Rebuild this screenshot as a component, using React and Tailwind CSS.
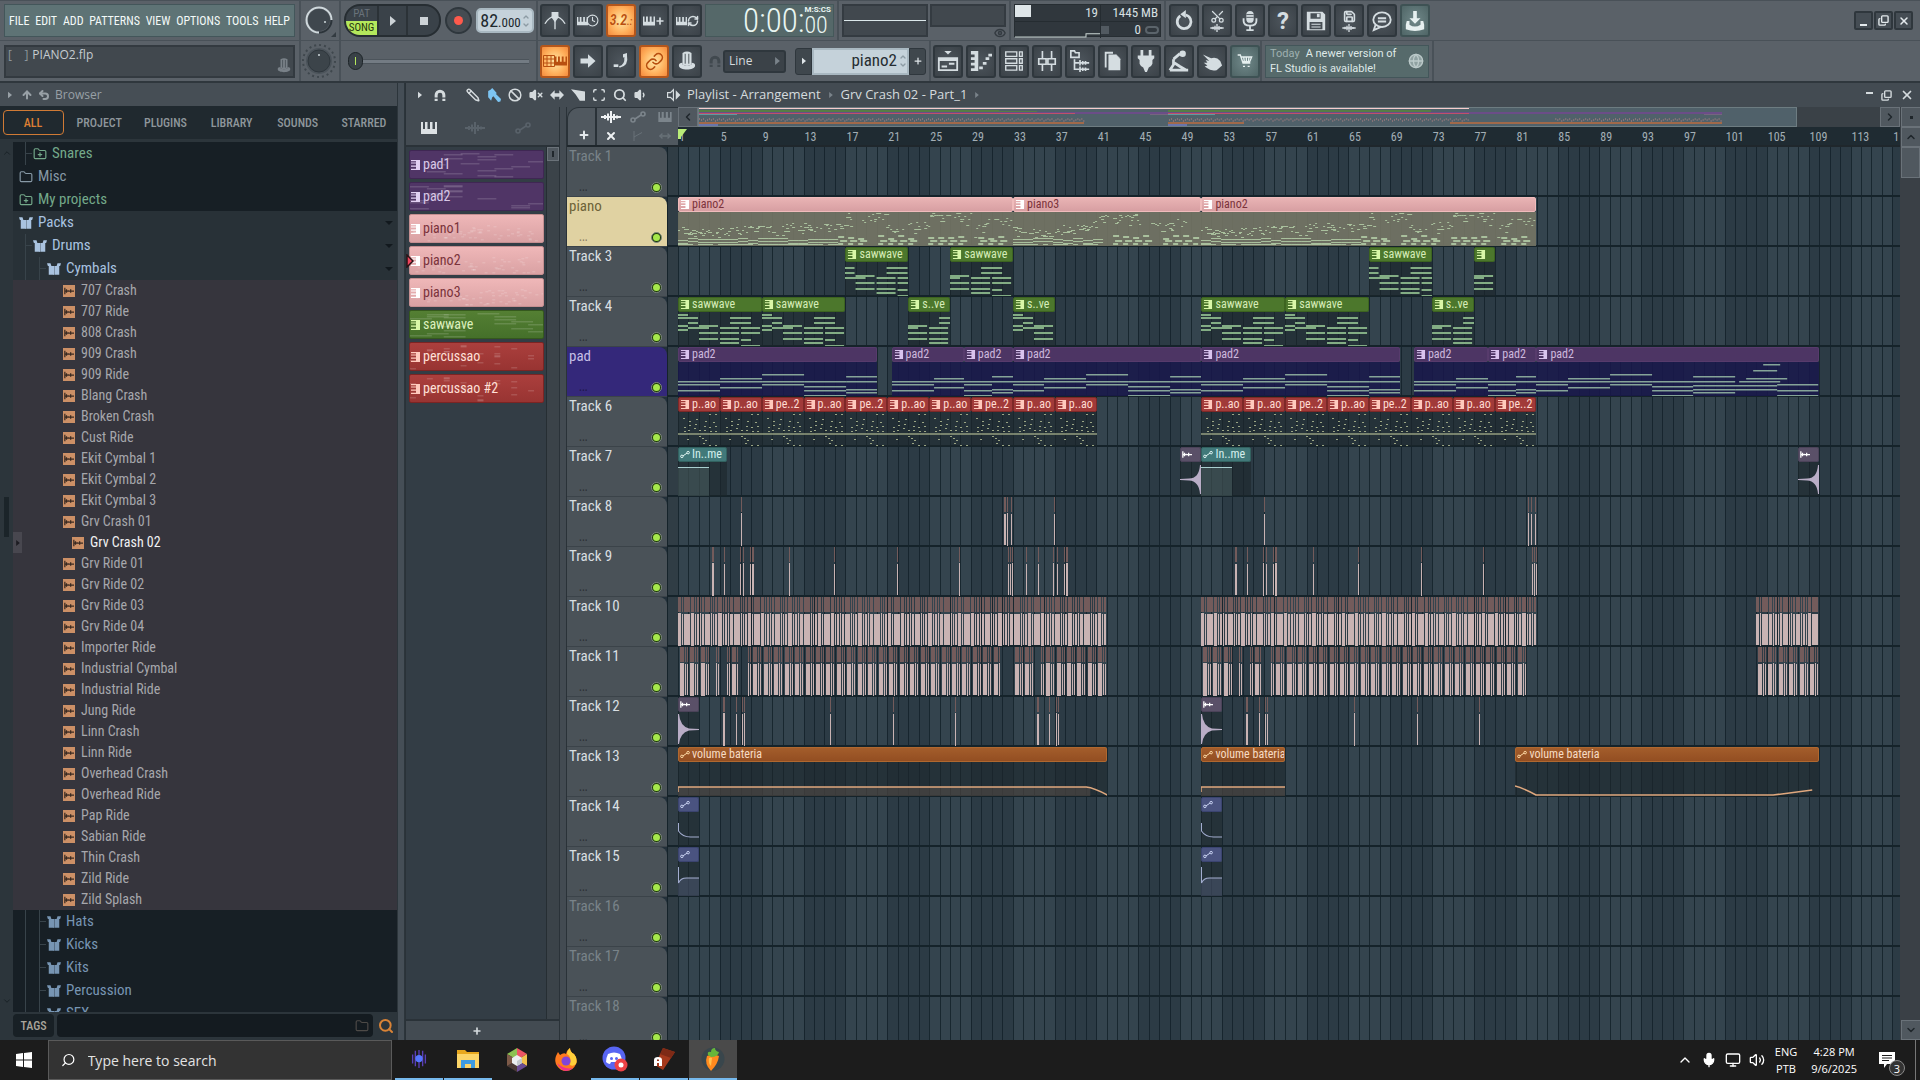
import {
  ArrowUp, Undo2, ChevronUp, ChevronDown, ChevronLeft, ChevronRight, X, Plus, Copy, Search, Folder,
  FolderPlus, Pencil, Ban, VolumeX, MoveHorizontal, Scan, Volume2, Volume1, Link, RefreshCw, Scissors,
  Mic, Save, Globe, Eye, Clock, Monitor,
} from "lucide-react";

const LANE = 1221;
const BAR = 10.46;
const pct = (n) => `${(n / LANE) * 100}%`;

/* ---------- small icons ---------- */
const Keys = ({ className }) => (
  <svg viewBox="0 0 16 12" className={className} fill="currentColor" aria-hidden="true">
    <path d="M0 0h2v7h2V0h2.5v7h2.5V0h2.5v7h2.5V0H16v12H0z" />
  </svg>
);
const PatternIcon = ({ className }) => (
  <svg viewBox="0 0 9 10" className={className} fill="currentColor" aria-hidden="true">
    <path d="M0 0h9v10H0V8.800h5V6.800H0V5.500h5V3.500H0V2.500h5V1.200H0z" />
  </svg>
);
const AutoIcon = ({ className }) => (
  <svg viewBox="0 0 16 12" className={className} fill="none" stroke="currentColor" strokeWidth="1.6" aria-hidden="true">
    <circle cx="3" cy="9" r="2" />
    <circle cx="13" cy="3" r="2" />
    <path d="M5 8l6-4" />
  </svg>
);
const WaveIcon = ({ className }) => (
  <svg viewBox="0 0 20 12" className={className} stroke="currentColor" strokeWidth="2" aria-hidden="true">
    <path d="M0 6h20M4 4v4M7 2.500v7M10 0v12M13 3v6M16 4.500v3" />
  </svg>
);
const AudioIcon = ({ className }) => (
  <svg viewBox="0 0 12 8" className={className} stroke="currentColor" strokeWidth="1.5" aria-hidden="true">
    <path d="M1 0v8M3 2v4M5 3v2M8 2v4M1 4h11" />
  </svg>
);
const PackIcon = ({ className }) => (
  <svg viewBox="0 0 16 13" className={className} fill="currentColor" aria-hidden="true">
    <path d="M0 0h4l1 3h3v10H2V3H1zM16 0h-4l-1 3H9v10h5V3h1z" />
    <path d="M7 3h2v10H7z" opacity=".7" />
  </svg>
);
const Tri = ({ className }) => (
  <svg viewBox="0 0 6 10" className={className} fill="currentColor" aria-hidden="true">
    <path d="M0 0l6 5-6 5z" />
  </svg>
);
const Horseshoe = ({ className }) => (
  <svg viewBox="0 0 14 14" className={className} fill="none" stroke="currentColor" strokeWidth="3.5" aria-hidden="true">
    <path d="M2.500 10V7a4.500 4.500 0 0 1 9 0v3" />
    <path d="M2.500 11.500V14M11.500 11.500V14" />
  </svg>
);
const Hat = ({ className }) => (
  <svg viewBox="0 0 20 22" className={className} fill="currentColor" aria-hidden="true">
    <path d="M5 2q5-3 10 0v13q-5 3-10 0z" />
    <path d="M1 16q0-3 4-3v2q5 3 10 0v-2q4 0 4 3c0 6-18 6-18 0z" />
    <path d="M8 3v11M12 3v11" stroke="#3f474d" strokeWidth="1" />
  </svg>
);
const Ico = ({ d, w = 2, fill = "none", className = "size-[22px]", children }) => (
  <svg viewBox="0 0 24 24" className={className} fill={fill} stroke="currentColor" strokeWidth={w} aria-hidden="true">
    {d && <path d={d} />}
    {children}
  </svg>
);

/* ---------- toolbar ---------- */
function Tool({ label, tone = "dark", children }) {
  const tones = {
    dark: "border-[#2f373d] bg-[radial-gradient(#4d555c,#3b4248)] text-[#d5dde1]",
    hot: "border-[#b4561b] bg-[radial-gradient(#ffe9a8,#ffb05c_60%,#f58a3c)] text-[#b84f10]",
    teal: "border-[#3e5254] bg-[radial-gradient(#71898a,#4f6566)] text-[#e6f0f0]",
  };
  return (
    <button type="button" aria-label={label} className={`flex h-[33px] w-[30px] shrink-0 items-center justify-center rounded-[3px] border-2 ${tones[tone]}`}>
      {children}
    </button>
  );
}

const Cell = ({ className, children }) => (
  <div className={`flex shrink-0 items-center border-r-2 border-[#495158] ${className}`}>{children}</div>
);

const MENU = ["FILE", "EDIT", "ADD", "PATTERNS", "VIEW", "OPTIONS", "TOOLS", "HELP"];

function Toolbar() {
  return (
    <header className="shrink-0 border-b-2 border-[#2f373d] bg-[#5a6168]">
      <div className="flex h-[41px] border-t border-b border-[#495158]">
        <Cell className="w-[301px] px-1">
          <nav className="flex h-[33px] w-full items-center justify-between border border-[#43565a] bg-[#5e7375] px-1 font-['Roboto_Condensed','Roboto',sans-serif] text-[12px] text-[#f4faf8]">
            {MENU.map((m) => (
              <button key={m} type="button">{m}</button>
            ))}
          </nav>
        </Cell>
        <Cell className="w-10 justify-center">
          <svg viewBox="0 0 34 34" className="size-[34px]" role="img" aria-label="Main volume">
            <circle cx="16" cy="16" r="11" fill="#3f474e" />
            <path d="M16 28.500A12.500 12.500 0 1 1 28.500 16" fill="none" stroke="#cfd8dc" strokeWidth="2" />
            <path d="M28.500 16A12.500 12.500 0 0 1 16 28.500" fill="none" stroke="#2c343a" strokeWidth="2" />
            <circle cx="22" cy="18" r="1" fill="#cfd8dc" />
            <path d="M33 28v5h-5z" fill="#333b41" />
          </svg>
        </Cell>
        <Cell className="w-[197px] gap-1 pl-[3px]">
          <div className="flex h-[33px] overflow-hidden rounded-2xl border-2 border-[#262d32] bg-[#3a4249]">
            <button type="button" className="w-[31px] font-['Roboto_Condensed',sans-serif] text-[11px] leading-[14px]">
              <span className="block pt-px text-[#69727a]">PAT</span>
              <span className="block bg-[#b4e85c] text-[#24350e]">SONG</span>
            </button>
            <button type="button" aria-label="Play" className="flex w-[31px] items-center justify-center border-x-2 border-[#2b3237] text-[#cdd3d7]">
              <Tri className="h-2.5 w-1.5" />
            </button>
            <button type="button" aria-label="Stop" className="flex w-[31px] items-center justify-center">
              <span className="size-2 bg-[#cdd3d7]" />
            </button>
          </div>
          <button type="button" aria-label="Record" className="flex size-[27px] items-center justify-center rounded-full border-2 border-[#2f373d] bg-[#454c52]">
            <span className="size-[9px] rounded-full bg-[#ff5a4c]" />
          </button>
          <div className="mr-0.5 flex h-[25px] flex-1 items-center justify-center rounded-[5px] border-2 border-[#a9b8c1] bg-[#c5d2da] font-['Roboto_Condensed',sans-serif] text-[18px] text-[#20282d]">
            82<span className="pt-1 text-[13px]">.000</span>
            <span className="ml-px flex flex-col text-[#8d9ba4]">
              <ChevronUp className="size-2" strokeWidth={4} />
              <ChevronDown className="size-2" strokeWidth={4} />
            </span>
          </div>
        </Cell>
        <Cell className="w-[301px] gap-[3px] pl-0.5">
          <Tool label="Metronome">
            <Ico w={1.5}>
              <path d="M1 15q5-8 11-8t11 8M12 7v14" />
              <path d="M9 3h6v5l-3 4-3-4z" fill="currentColor" />
            </Ico>
          </Tool>
          <Tool label="Wait for input">
            <Keys className="h-3 w-[11px]" />
            <Clock className="-ml-0.5 size-[13px]" />
          </Tool>
          <Tool label="Countdown" tone="hot">
            <span className="font-['Roboto_Condensed',sans-serif] text-[14px] font-medium italic">3.2<span className="text-[10px]">.:</span></span>
          </Tool>
          <Tool label="Overdub">
            <Keys className="h-3 w-3" />
            <Plus className="size-2.5" strokeWidth={4} />
          </Tool>
          <Tool label="Loop record">
            <Keys className="h-3 w-[11px]" />
            <RefreshCw className="size-3" strokeWidth={3} />
          </Tool>
          <div className="flex h-[33px] w-[129px] items-center justify-end border border-[#45585a] bg-[#556869] pr-0.5 font-['Roboto_Condensed','Roboto',sans-serif] font-light text-[#eaf6f2]">
            <span className="text-[33px] leading-[33px]">0:00:</span>
            <span className="flex flex-col">
              <span className="text-right font-['Roboto',sans-serif] text-[8px] leading-[9px] font-bold">M:S:CS</span>
              <span className="text-[24px] leading-[22px]">00</span>
            </span>
          </div>
        </Cell>
        <Cell className="w-[172px] items-start gap-0.5 px-[3px] pt-[3px]">
          <div className="flex h-[33px] w-[86px] items-center border-2 border-[#343b41] bg-[#41484e]">
            <span className="h-px w-full bg-[#dce8ea]" />
          </div>
          <div className="flex flex-1 flex-col items-end">
            <div className="h-[23px] w-full border-2 border-[#343b41] bg-[#41484e]" />
            <Eye className="size-3 text-[#343b41]" strokeWidth={3} />
          </div>
        </Cell>
        <Cell className="w-[155px] px-[3px]">
          <div className="grid h-[33px] w-full grid-cols-[86px_1fr] border border-[#272e33] bg-[#30373d] font-['Roboto_Condensed',sans-serif] text-[13px] leading-4 text-[#d8e0e3]">
            <div className="flex justify-between border-r border-b border-[#252c31] pr-0.5">
              <span className="h-3 w-4 bg-[#dfe6e9]" />19
            </div>
            <div className="border-b border-[#252c31] pr-0.5 text-right whitespace-nowrap">1445 MB</div>
            <div className="flex items-end border-r border-[#252c31]">
              <svg viewBox="0 0 85 15" preserveAspectRatio="none" className="h-full w-full" aria-hidden="true">
                <path d="M0 14h71v-3h14" fill="none" stroke="#c9d6d3" />
              </svg>
            </div>
            <div className="flex items-center justify-between">
              <span className="size-2 bg-[#525a61]" />
              <span className="flex items-center gap-1">0<span className="mr-px h-2 w-3.5 rounded-full border-2 border-[#5b646b]" /></span>
            </div>
          </div>
        </Cell>
        <div className="flex items-center gap-[3px] pl-[3px]">
          <Tool label="Undo"><Ico w={3} d="M14 5.500a7.500 7.500 0 1 1-6 1"><path d="M14 0v9L8 4.500z" fill="currentColor" strokeWidth="0" /></Ico></Tool>
          <Tool label="Cut">
            <span className="flex flex-col items-center"><Scissors className="size-[15px] -rotate-90" /><WaveIcon className="h-2 w-3.5" /></span>
          </Tool>
          <Tool label="Microphone">
            <Ico w={2}><rect x="8" y="1" width="8" height="13" rx="4" fill="currentColor" strokeWidth="0" /><path d="M5 9v3q0 5 7 5t7-5V9M12 17v5M8 22h8" /><path d="M8 5h8M8 8h8" stroke="#474f56" strokeWidth="1" /></Ico>
          </Tool>
          <Tool label="Help"><span className="font-['Roboto',sans-serif] text-[24px] leading-none font-bold">?</span></Tool>
          <Tool label="Save">
            <Ico fill="currentColor" w={0}><path d="M2 2h17l3 3v17H2zM6 3.500v6h11v-6zM5 13v8h14v-8z" fillRule="evenodd" /><path d="M7 15h10v1H7zM7 18h10v1H7zM13 4h3v4h-3z" /></Ico>
          </Tool>
          <Tool label="Save new version">
            <span className="flex flex-col items-center gap-px"><Save className="size-[13px]" strokeWidth={3} /><WaveIcon className="h-2 w-3.5" /></span>
          </Tool>
          <Tool label="Chat">
            <Ico w={2}><ellipse cx="12" cy="10.500" rx="9.500" ry="8" /><path d="M5 16l-2 6 8-3.500M7.500 9h9M7.500 12.500h9" /></Ico>
          </Tool>
          <Tool label="Download" tone="teal">
            <Ico w={0} fill="currentColor"><path d="M10 1h4v8h4l-6 6-6-6h4z" /><path d="M3 12l-1 4v5q10 4 20 0v-5l-1-4h-3v4q-6 4-12 0v-4z" /></Ico>
          </Tool>
        </div>
        <div className="mr-[7px] ml-auto flex items-center gap-px text-[#e3e9ec]">
          {[["Minimise", <span className="mt-2 h-0.5 w-[7px] bg-current" />], ["Restore", <Copy className="size-[11px] -scale-x-100 rotate-180" strokeWidth={3} />], ["Close", <X className="size-3" strokeWidth={3} />]].map(([n, ic]) => (
            <button key={n} type="button" aria-label={n} className="flex size-[19px] items-center justify-center rounded-[2px] border-2 border-[#2f373d] bg-[#454d54]">{ic}</button>
          ))}
        </div>
      </div>

      <div className="flex h-[40px]">
        <Cell className="w-[301px] px-1">
          <div className="flex h-[33px] w-full justify-between border-2 border-[#333a40] bg-[#41484e] px-0.5 font-['Open_Sans',sans-serif] text-[12px] leading-[15px] text-[#c5ccd0]">
            <span><span className="mr-1 whitespace-pre text-[#8c959b]">[&nbsp;&nbsp;&nbsp; ]</span>PIANO2.flp</span>
            <Hat className="mt-2.5 h-[17px] w-3.5 text-[#798188]" />
          </div>
        </Cell>
        <Cell className="w-10 justify-center">
          <svg viewBox="0 0 36 36" className="size-9" role="img" aria-label="Master pitch">
            <circle cx="17" cy="18" r="16" fill="none" stroke="#3f474d" strokeWidth="2" strokeDasharray="2 3" />
            <circle cx="17" cy="18" r="13" fill="#4b535a" />
            <circle cx="17" cy="18" r="11" fill="#3c444a" stroke="#2f373d" />
            <circle cx="17" cy="12" r="1" fill="#cfd8dc" />
          </svg>
        </Cell>
        <Cell className="w-[197px] px-[7px]">
          <div className="relative flex w-full items-center">
            <span className="h-[5px] w-full border-y border-[#4c545b] bg-[#737b83]" />
            <input type="range" aria-label="Song position" min="0" max="100" defaultValue="0" className="absolute inset-0 w-full opacity-0" />
            <span className="pointer-events-none absolute left-0 flex h-[18px] w-[15px] items-center justify-center rounded-full border border-[#1e2529] bg-[#394147]"><span className="h-2 w-px bg-[#b4e85c]" /></span>
          </div>
        </Cell>
        <Cell className="w-[393px] gap-[3px] pl-0.5">
          <Tool label="Typing keyboard" tone="hot">
            <svg viewBox="0 0 12 12" className="h-3 w-3" fill="none" stroke="currentColor" aria-hidden="true"><path d="M.5.500h11v11H.5zM.5 4h11M.5 8h11M4 0v12M8 0v12" /></svg>
            <Keys className="h-3 w-3" />
          </Tool>
          <Tool label="Step edit"><Ico w={0} fill="currentColor" className="size-5" d="M3 9h9V4l9 8-9 8v-5H3z" /></Tool>
          <Tool label="Note slide"><Ico w={0} fill="currentColor" className="size-4"><path d="M1 17h7v4H1z" /><path d="M9 20q9-2 8-14l-2 1V2l6-2v4q3 15-11 18z" /></Ico></Tool>
          <Tool label="Link" tone="hot"><Link className="size-[19px]" strokeWidth={2} /></Tool>
          <Tool label="Plugin"><Hat className="h-5 w-[18px]" /></Tool>
          <Horseshoe className="ml-1 size-3 text-[#41494f]" />
          <button type="button" className="-ml-px flex h-[23px] w-[63px] items-center justify-between rounded-[3px] border-2 border-[#2f373d] bg-[#3b4248] px-1 font-['Open_Sans',sans-serif] text-[12px] text-[#d5dbde]">
            Line<Tri className="h-2 w-[5px] text-[#7a838a]" />
          </button>
          <div className="ml-1.5 flex h-[27px] flex-1 items-stretch pr-[3px]">
            <button type="button" aria-label="Pattern menu" className="flex w-[17px] items-center justify-center rounded-l-[3px] border border-[#2f373d] bg-[#3f474d] text-[#dfe5e8]"><Tri className="h-2 w-1" /></button>
            <div className="flex flex-1 items-center justify-end gap-0.5 border-2 border-[#a9b8c1] bg-[#c5d2da] font-['Roboto_Condensed',sans-serif] text-[17px] text-[#252d32]">
              piano2
              <span className="flex flex-col text-[#8d9ba4]"><ChevronUp className="size-2" strokeWidth={4} /><ChevronDown className="size-2" strokeWidth={4} /></span>
            </div>
            <button type="button" aria-label="Add pattern" className="flex w-[17px] items-center justify-center rounded-r-[3px] border border-[#2f373d] bg-[#3f474d] text-[#dfe5e8]"><Plus className="size-2.5" strokeWidth={3} /></button>
          </div>
        </Cell>
        <Cell className="w-[331px] gap-[3px] pl-0.5">
          <Tool label="Playlist"><Ico w={2}><path d="M2 9h20v13H2zM2 11h20M5 18h6M13 15h6" /><path d="M8 1h8l-4 4z" fill="currentColor" strokeWidth="0" /></Ico></Tool>
          <Tool label="Piano roll"><Ico w={0} fill="currentColor"><path d="M1 1h8v22H1v-3h4v-3H1v-3h4v-3H1V8h4V5H1z" /><path d="M10 18h4v3h-4zM14 13h4v3h-4zM17 8h4v3h-4zM20 4h4v3h-4z" /></Ico></Tool>
          <Tool label="Channel rack"><Ico w={1.5} d="M3 2h12v5H3zM3 9.500h12v5H3zM3 17h12v5H3zM18 2h3v5h-3zM18 9.500h3v5h-3zM18 17h3v5h-3z" /></Tool>
          <Tool label="Mixer"><Ico w={1.8} d="M7 1v8M7 16v7M17 1v8M17 16v7M3 9.500h8v6H3zM13 9.500h8v6h-8z" /></Tool>
          <Tool label="Browser"><Ico w={1.8} d="M2 1h4l1 2h4v5H2zM6 10v11h5M6 14h5M12 11v6M12 14h10M15 12v4M18 12v4M12 18v6M12 21h10M15 19v4M18 19v4" /></Tool>
          <Tool label="Projects"><Ico w={0} fill="currentColor"><path d="M7 5h8l5 5v12H7z" /><path d="M15 4l5.500 5.500H15z" opacity=".7" /><path d="M3 2h9v2H5v15H3z" /></Ico></Tool>
          <Tool label="Plugins"><Ico w={0} fill="currentColor"><path d="M6 0h3v6H6zM15 0h3v6h-3zM3 6h18v3l-2 2v4q-1 3-4 4l-2 5h-2l-2-5q-3-1-4-4v-4L3 9z" /></Ico></Tool>
          <Tool label="Performance"><Ico w={3}><path d="M6 10l7-6M6 10v6l-4 6M7 14l6 4 7 4M2 22h20" /><circle cx="16" cy="4" r="3.5" fill="currentColor" strokeWidth="0" /></Ico></Tool>
          <Tool label="Touch"><Ico w={0} fill="currentColor" d="M2 5l9 4q6-2 10 3l2 5-6 5q-7 1-10-2l-3-2 3-1-4-3 4 0-2-3 4 1z" /></Tool>
          <Tool label="Shop" tone="teal"><Ico w={2} className="size-4" d="M1 3h4l4 12h11M6 6h16l-3 7H8M10 6l1 7M14 6v7M18 6l-1 7M9 20h3M16 20h3" /></Tool>
        </Cell>
        <Cell className="w-[172px] px-[3px]">
          <div className="flex h-[33px] w-full items-center justify-between border border-[#43565a] bg-[#566a6b] px-1 font-['Roboto',sans-serif] text-[11px] leading-[15px] whitespace-nowrap text-[#dfe9e8]">
            <p><span className="mr-1.5 text-[#9fb0b0]">Today</span>A newer version of<br />FL Studio is available!</p>
            <Globe className="size-4 text-[#bccaca]" fill="#8fa1a1" />
          </div>
        </Cell>
      </div>
    </header>
  );
}

/* ---------- browser ---------- */
const TABS = ["ALL", "PROJECT", "PLUGINS", "LIBRARY", "SOUNDS", "STARRED"];
const FILES = [
  "707 Crash", "707 Ride", "808 Crash", "909 Crash", "909 Ride", "Blang Crash", "Broken Crash", "Cust Ride", "Ekit Cymbal 1",
  "Ekit Cymbal 2", "Ekit Cymbal 3", "Grv Crash 01", "Grv Crash 02", "Grv Ride 01", "Grv Ride 02", "Grv Ride 03", "Grv Ride 04",
  "Importer Ride", "Industrial Cymbal", "Industrial Ride", "Jung Ride", "Linn Crash", "Linn Ride", "Overhead Crash",
  "Overhead Ride", "Pap Ride", "Sabian Ride", "Thin Crash", "Zild Ride", "Zild Splash",
];

function FolderRow({ pad, icon, color, open, lines, children }) {
  return (
    <li className={`flex h-[23px] shrink-0 items-center ${open ? "bg-[#283137]" : ""}`}>
      {lines >= 1 && <span className="ml-3 h-full w-px bg-[#38434a]" />}
      {lines >= 2 && <span className="ml-[13px] h-full w-px bg-[#38434a]" />}
      {lines >= 1 && <span className="h-px w-1.5 bg-[#38434a]" />}
      <button type="button" className={`flex flex-1 items-center gap-[5px] text-[15px] ${pad} ${color}`}>
        {icon}{children}
      </button>
      {open && <span className="mr-1 border-x-4 border-t-4 border-x-transparent border-t-[#12191e]" />}
    </li>
  );
}

function Browser() {
  const pack = <PackIcon className="h-3 w-3.5" />;
  return (
    <aside className="flex w-[397px] shrink-0 flex-col bg-[#2c353b]">
      <div className="flex h-[23px] shrink-0 items-center gap-[5px] bg-[#464e55] pl-2 font-['Open_Sans',sans-serif] text-[12px] text-[#98a0a6]">
        <Tri className="mr-1 h-2 w-1" />
        <ArrowUp className="size-3" strokeWidth={4} />
        <Undo2 className="size-3" strokeWidth={4} />
        Browser
      </div>
      <div className="grid h-[33px] shrink-0 grid-cols-6 place-items-center bg-[#20292f] font-['Roboto_Condensed',sans-serif] text-[12px] font-medium text-[#8e969b]">
        {TABS.map((t, i) => (
          <button key={t} type="button" className={i === 0 ? "h-[25px] w-[61px] rounded-[4px] border border-[#d07a35] text-[#dd7e33]" : ""}>{t}</button>
        ))}
      </div>
      <div className="flex min-h-0 flex-1 pt-[3px]">
        <div className="flex w-[13px] shrink-0 flex-col items-center justify-between py-1.5 text-[#161e23]">
          <ChevronUp className="size-2.5" />
          <span className="-mt-[120px] h-10 w-[5px] bg-[#1b2429]" />
          <ChevronDown className="size-2.5" />
        </div>
        <ul className="relative flex min-h-0 flex-1 flex-col overflow-hidden bg-[#171f25] font-['Roboto_Condensed',sans-serif]">
          <FolderRow lines={1} pad="pl-px" color="text-[#74a98a]" icon={<FolderPlus className="size-3.5" />}>Snares</FolderRow>
          <FolderRow pad="pl-1.5" color="text-[#8799a6]" icon={<Folder className="size-3.5" />}>Misc</FolderRow>
          <FolderRow pad="pl-1.5" color="text-[#74a98a]" icon={<FolderPlus className="size-3.5" />}>My projects</FolderRow>
          <FolderRow open pad="pl-1.5" color="text-[#a9c3e0]" icon={pack}>Packs</FolderRow>
          <FolderRow open lines={1} pad="pl-px" color="text-[#a9c3e0]" icon={pack}>Drums</FolderRow>
          <FolderRow open lines={2} pad="pl-px" color="text-[#a9c3e0]" icon={pack}>Cymbals</FolderRow>
          {FILES.map((f) => {
            const sel = f === "Grv Crash 02";
            return (
              <li key={f} className="relative h-[21px] shrink-0 bg-[#36353d]">
                {sel && <span className="absolute left-0 flex h-[21px] w-[9px] items-center justify-center bg-[#48474f] text-[#1d1c22]"><Tri className="h-1.5 w-1" /></span>}
                <button type="button" className={`flex h-full items-center gap-1.5 text-[14px] ${sel ? "pl-[59px] text-[#f1f1f3]" : "pl-[50px] text-[#a6a7ac]"}`}>
                  <span className="flex h-3 w-3 items-center justify-center bg-[#cd9066] text-[#3a2a22]"><AudioIcon className="h-2 w-2.5" /></span>
                  {f}
                </button>
              </li>
            );
          })}
          {["Hats", "Kicks", "Kits", "Percussion", "SFX"].map((f) => (
            <FolderRow key={f} lines={2} pad="pl-px" color="text-[#7795b3]" icon={pack}>{f}</FolderRow>
          ))}
        </ul>
      </div>
      <div className="flex h-7 shrink-0 items-center gap-[3px] pt-0.5 pr-px pb-[3px] pl-[13px]">
        <button type="button" className="h-[23px] w-[41px] rounded-[4px] bg-[#182025] font-['Roboto_Condensed',sans-serif] text-[12px] font-medium text-[#a9a59b]">TAGS</button>
        <div className="flex h-[23px] flex-1 items-center rounded-[4px] bg-[#141b20] pr-1">
          <input type="text" aria-label="Filter by tag" className="w-0 flex-1 bg-transparent text-[13px] text-white outline-none" />
          <Folder className="size-3.5 text-[#4d4a47]" />
        </div>
        <button type="button" aria-label="Search" className="px-0.5 text-[#d98336]"><Search className="size-4" strokeWidth={3} /></button>
      </div>
    </aside>
  );
}

/* ---------- note data ---------- */
function rng(seed) {
  let s = seed;
  return () => {
    s = (s * 1103515245 + 12345) % 2147483648;
    return s / 2147483648;
  };
}

function pianoNotes(seed, width) {
  const r = rng(seed);
  const out = [];
  let drift = 32;
  for (let x = 0; x < width; x += 2) {
    const t = x / width;
    if (x % 42 < 2) drift = t < 0.28 ? 32 : 20 + r() * 12;
    drift = Math.max(19, Math.min(36, drift + (r() - 0.5) * 3));
    const sparse = t > 0.5 && (x % 46) > 34;
    if (r() < (sparse ? 0.2 : 0.85)) out.push([x, Math.round(drift + (r() - 0.5) * 8), r() < 0.15 ? 5 : 2, 1]);
    if (r() < 0.35 && !sparse) out.push([x, Math.round(drift + (r() - 0.3) * (t > 0.5 ? 16 : 8)), 3, 1]);
  }
  for (let x = 0; x < width; x += 10) {
    const low = x < width * 0.45;
    if (low) {
      const y = 41 + Math.round(r() * 2);
      out.push([x, y, 10, 1], [x, y + 3, 10, 1], [x, 47, r() < 0.5 ? 10 : 5, 1]);
    } else if (x % 50 < 36) {
      out.push([x, 38 + Math.round(r() * 3), 6, 2], [x + 2, 43, 7, 2], [x, 46, 5, 2]);
    }
  }
  return out.filter((n) => n[0] + n[2] <= width && n[1] < 49);
}

const SAW = [
  [0, 17, 10], [0, 20, 10], [10, 20, 10], [10, 25, 10], [0, 28, 10], [21, 28, 19], [10, 30, 21], [0, 32, 10], [21, 35, 19], [21, 41, 19],
  [42, 30, 19], [42, 35, 19], [42, 41, 19], [42, 45, 19], [52, 20, 21], [52, 25, 21],
  [63, 30, 19], [63, 35, 19], [63, 42, 10], [63, 48, 19],
];
const chord = (x, w, ys) => ys.map((y) => [x, y, w]);
const A = [34, 37, 43], B = [31, 34, 40], C = [27, 34, 37], D = [34, 39, 43, 48], E = [29, 34, 42, 45];
const PAD1 = [...chord(0, 42, A), ...chord(42, 42, B), ...chord(84, 42, C), ...chord(126, 42, D), ...chord(168, 31, E)];
const PAD2 = [...chord(0, 42, A), ...chord(42, 32, B)];
const PAD3 = [...chord(0, 28, [34, 37, 43, 48]), ...chord(28, 21, E)];
const PAD4 = [...chord(0, 31, A), ...chord(31, 42, B), ...chord(73, 42, C), ...chord(115, 42, D), ...chord(157, 31, E)];
const PAD5 = [
  ...chord(0, 32, A), ...chord(32, 42, B), ...chord(74, 42, C), ...chord(116, 41, D), ...chord(157, 42, E),
  [157, 38, 84], [199, 42, 42], [203, 34, 41], [210, 31, 41], [217, 23, 24], [227, 17, 17], [241, 37, 41], [241, 43, 41], [241, 48, 41],
];
const PERC = [
  [5, 21], [6, 30], [6, 34], [10, 33], [11, 24], [11, 28], [16, 31], [18, 22], [17, 27], [21, 33], [26, 29], [26, 33], [27, 24], [31, 17], [31, 30],
  [32, 34], [37, 17], [37, 34], [35, 25], [37, 29], [9, 42], [24, 41], [27, 43], [25, 46], [31, 48], [37, 48], [21, 39],
];

const KIND = {
  piano: { head: "bg-[linear-gradient(#e9b3b4,#d79fa2)] border-[#f0bcbc] text-[#7b333b]", icon: "text-white", body: "bg-[#747665]/90", note: "#a9c09d" },
  saw: { head: "bg-[#4c772c] border-[#3d6420] text-[#d6ecb8]", icon: "text-[#d9f7a8]", body: "bg-[#1c262c]/60", note: "#83ad84" },
  pad: { head: "bg-[#4d3564] border-[#573b6c] text-[#cdb9de]", icon: "text-[#d9c4ee]", body: "bg-[#19184b]/85", note: "#85a498" },
  perc: { head: "bg-[#a13a39] border-[#7d2827] text-[#ffdcd2]", icon: "text-[#ffc9bd]", body: "bg-[#1c262c]/60", note: "#9ba584" },
  auto: { head: "bg-[#41797a] border-[#32615f] text-[#d3eeec]", icon: "text-[#e4f7f5]", body: "bg-[#1c262c]/60" },
  wave: { head: "bg-[#5a5068] border-[#4b4359] text-white", icon: "text-white", body: "bg-[#1c262c]/60" },
  vol: { head: "bg-[linear-gradient(#a35d2b,#934e22)] border-[#b0682f] text-[#f7dcc4]", icon: "text-[#ffdca8]", body: "bg-[#1c262c]/60" },
  env: { head: "bg-[#4a5380] border-[#3b4470] text-white", icon: "text-[#cdd6f5]", body: "bg-[#1c262c]/60" },
};

function Clip({ kind, at, len, label, notes = [], off = 0, children }) {
  const k = KIND[kind];
  const w = len * BAR;
  const Icon = kind === "wave" ? AudioIcon : ["auto", "vol", "env"].includes(kind) ? AutoIcon : PatternIcon;
  return (
    <div className="absolute top-0 flex h-[49px] flex-col" style={{ left: pct((at - 1) * BAR), width: pct(w) }}>
      <div className={`flex h-[15px] shrink-0 items-center gap-0.5 overflow-hidden rounded-[2px] border pl-px font-['Roboto_Condensed',sans-serif] text-[12px] leading-[13px] whitespace-nowrap ${k.head}`}>
        <Icon className={`h-[9px] w-[10px] shrink-0 ${k.icon}`} />
        {label}
      </div>
      <div className={`min-h-0 flex-1 ${k.body}`}>
        <svg viewBox={`${off * BAR} 15 ${w} 34`} preserveAspectRatio="none" className="h-full w-full" aria-hidden="true">
          {notes.map(([x, y, nw, nh = 2], i) => <rect key={i} x={x} y={y} width={nw} height={nh} fill={k.note} />)}
          {children}
        </svg>
      </div>
    </div>
  );
}

/* each hit is [x, width]: a muted label strip over a bright waveform body */
function Hits({ hits }) {
  return (
    <svg viewBox={`0 0 ${LANE} 50`} preserveAspectRatio="none" className="absolute inset-0 h-full w-full" shapeRendering="crispEdges" aria-hidden="true">
      {hits.map(([x, w], i) => (
        <g key={i}>
          <rect x={x} y="0" width={w} height="15" fill="#735b5b" />
          <rect x={x} y={i % 3 ? 17 : 16} width={w} height={i % 3 ? 31 : 33} fill="#c9b3b3" />
        </g>
      ))}
    </svg>
  );
}

const SEC = 523;
const repeat = (hits, cut) => [...hits, ...hits.filter(([x]) => x < cut).map(([x, w]) => [x + SEC, w])];
const T8 = [...repeat([[63, 1]], 100), [326, 2], [329, 1], [333, 1], [376, 1], [849, 1], [852, 1], [856, 1]];
const T9 = repeat([[34, 2], [46, 1], [62, 1], [65, 1], [72, 1], [74, 2], [111, 1], [156, 1], [219, 1], [281, 1], [330, 1], [332, 1], [334, 1], [348, 1], [360, 1], [375, 1], [379, 1], [386, 1], [388, 2]], 335);
const T12 = repeat([[45, 2], [58, 1], [64, 1], [66, 1], [152, 1], [215, 1], [277, 1], [359, 2], [371, 1], [378, 1], [380, 1]], 280);
function dense(from, to) {
  const ws = [3, 1, 6, 3, 1, 2, 1, 2, 5, 1, 1, 2, 4, 1, 2, 1, 3, 6, 1, 1, 2];
  const out = [];
  let x = from;
  for (let i = 0; x < to; i++) {
    const w = Math.min(ws[i % ws.length], to - x);
    out.push([x, w]);
    x += w + 1;
  }
  return out;
}
function groups(from, to, gaps = []) {
  const out = [];
  for (let g = from; g < to; g += BAR) {
    const b = Math.round(g);
    [[0, 4], [5, 1], [7, 1]].forEach(([dx, w]) => {
      const x = b + dx;
      if (x < to && !gaps.some(([a, z]) => x >= a && x < z)) out.push([x, w]);
    });
  }
  return out;
}
const T10 = [...dense(0, 428), ...dense(523, 857), ...dense(1077, 1139)];
const T11 = [...groups(2, 428, [[31, 35], [42, 48], [61, 68], [323, 336], [356, 361]]), ...groups(525, 848, [[554, 558], [565, 571], [584, 590]]), ...groups(1079, 1140)];

const PERC_A = ["p..ao", "p..ao", "pe..2", "p..ao", "pe..2", "p..ao", "p..ao", "pe..2", "p..ao", "p..ao"];
const PercNotes = (
  <g fill="#9ba584">
    <rect x="0" y="36" width="42" height="2" opacity=".7" />
    {PERC.map(([x, y], i) => <rect key={i} x={x} y={y} width="2" height="1" />)}
  </g>
);
const Fade = ({ flip }) => (
  <path d={flip ? "M0 32l9-.5q10 0 11-13.500h1v29h-1q-1-13-11-13.500L0 33z" : "M0 17h1q1 12 10 14.500l10 .5v1l-10 .5Q2 36 1 47H0z"} fill="#b9adc6" />
);
const IntroAuto = () => (<><rect x="0" y="20" width="31" height="30" fill="#6b8580" opacity=".3" /><rect x="0" y="20" width="31" height="1" fill="#a9cfd0" /></>);
const P2 = pianoNotes(7, 334);
const P3 = pianoNotes(23, 188);

const TRACKS = [
  { name: "Track 1", off: true },
  {
    name: "piano", head: "bg-[#e0d2a2] text-[#6d6238]",
    clips: [<Clip key="a" kind="piano" at={1} len={32} label="piano2" notes={P2} />, <Clip key="b" kind="piano" at={33} len={18} label="piano3" notes={P3} />, <Clip key="c" kind="piano" at={51} len={32} label="piano2" notes={P2} />],
  },
  { name: "Track 3", clips: [[17, 6, 1], [27, 6, 2], [67, 6, 1], [77, 2, 2]].map(([at, len, off]) => <Clip key={at} kind="saw" at={at} len={len} off={off} label={len > 2 ? "sawwave" : ""} notes={SAW} />) },
  { name: "Track 4", clips: [[1, 8, 0], [9, 8, 0], [23, 4, 2], [33, 4, 0], [51, 8, 0], [59, 8, 0], [73, 4, 2]].map(([at, len, off]) => <Clip key={at} kind="saw" at={at} len={len} off={off} label={len > 4 ? "sawwave" : "s..ve"} notes={SAW} />) },
  {
    name: "pad", head: "bg-[#34287a] text-[#c5bfe6]",
    clips: [[1, 19, PAD1], [21.4, 6.9, PAD2], [28.3, 4.7, PAD3], [33, 18, PAD4], [51, 19, PAD1], [71.3, 7.1, PAD2], [78.4, 4.6, PAD3], [83, 27, PAD5]].map(([at, len, n]) => <Clip key={at} kind="pad" at={at} len={len} label="pad2" notes={n.map(([x, y, w]) => [x, y, w, 1.5])} />),
  },
  { name: "Track 6", clips: [...PERC_A.map((l, i) => [1 + i * 4, l]), ...PERC_A.slice(0, 8).map((l, i) => [51 + i * 4, l])].map(([at, l]) => <Clip key={at} kind="perc" at={at} len={4} label={l}>{PercNotes}</Clip>) },
  {
    name: "Track 7",
    clips: [
      <Clip key="a" kind="auto" at={1} len={4.7} label="In..me"><IntroAuto /></Clip>, <Clip key="b" kind="wave" at={49} len={2}><Fade flip /></Clip>,
      <Clip key="c" kind="auto" at={51} len={4.7} label="In..me"><IntroAuto /></Clip>, <Clip key="d" kind="wave" at={108} len={2}><Fade flip /></Clip>,
    ],
  },
  { name: "Track 8", clips: <Hits hits={T8} /> },
  { name: "Track 9", clips: <Hits hits={T9} /> },
  { name: "Track 10", clips: <Hits hits={T10} /> },
  { name: "Track 11", clips: <Hits hits={T11} /> },
  { name: "Track 12", clips: [<Hits key="h" hits={T12} />, <Clip key="a" kind="wave" at={1} len={2}><Fade /></Clip>, <Clip key="b" kind="wave" at={51} len={2}><Fade /></Clip>] },
  {
    name: "Track 13",
    clips: [[1, 41, "M0 45V40H408q8 1 21 8"], [51, 8, "M0 45V40H84"], [81, 29, "M0 39q8 2 21 9H258l39-5"]].map(([at, len, d]) => (
      <Clip key={at} kind="vol" at={at} len={len} label="volume bateria">
        {at < 80 && <rect x="0" y="40" width={at === 1 ? 412 : 84} height="10" fill="#6b5a50" opacity=".4" />}
        <path d={d} fill="none" stroke="#e0a87e" strokeWidth="1.5" />
      </Clip>
    )),
  },
  { name: "Track 14", clips: [1, 51].map((at) => <Clip key={at} kind="env" at={at} len={2}><path d="M.5 26V34q4 6 12 6h9" fill="none" stroke="#a3add0" /></Clip>) },
  { name: "Track 15", clips: [1, 51].map((at) => <Clip key={at} kind="env" at={at} len={2}><path d="M0 36q2-5 8-5h13V50H0z" fill="#5a6385" opacity=".4" /><path d="M.5 20V36q2-5 8-5h13" fill="none" stroke="#a3add0" /></Clip>) },
  { name: "Track 16", off: true },
  { name: "Track 17", off: true },
  { name: "Track 18", off: true },
];

let GRID = "";
for (let i = 0; i * BAR < LANE; i++) GRID += `M${Math.round(i * BAR) + 0.5} 0V50`;
let SHADE = "";
for (let i = 4; i * BAR < LANE; i += 8) SHADE += `M${Math.round(i * BAR)} 0h42v50h-42z`;

function Track({ t }) {
  return (
    <div className="flex h-[50px] shrink-0">
      <div className={`relative w-[100px] shrink-0 rounded-tr-lg border-b border-[#3b4349] pl-0.5 font-['Roboto_Condensed',sans-serif] text-[15px] leading-[19px] ${t.head ?? (t.off ? "bg-[#4a5258] text-[#798389]" : "bg-[#4a5258] text-[#d9dfe2]")}`}>
        {t.name}
        <span className="absolute bottom-1 left-3 text-[10px] leading-[8px] font-bold text-black/40">...</span>
        <button type="button" aria-label={`Mute ${t.name}`} className="absolute right-[5px] bottom-[3px] size-[11px] rounded-full border border-[#7e8a80] bg-[#1f3a08] p-px">
          <span className="block size-full rounded-full bg-[#a6e84c]" />
        </button>
      </div>
      <div className="w-[11px] shrink-0 border-b-2 border-l border-[#15232a] bg-[#303d45]" />
      <div className="relative flex-1 overflow-hidden bg-[#34444e]">
        <svg viewBox={`0 0 ${LANE} 50`} preserveAspectRatio="none" className="absolute inset-0 h-full w-full" shapeRendering="crispEdges" aria-hidden="true">
          <path d={SHADE} fill="#2c3b45" />
          <path d={GRID} stroke="#14222a" strokeOpacity=".85" vectorEffect="non-scaling-stroke" />
          <path d={`M0 49H${LANE}`} stroke="#15232a" strokeWidth="2" />
        </svg>
        {t.clips}
      </div>
    </div>
  );
}

/* ---------- picker ---------- */
const PICK = [
  ["pad1", "pad"], ["pad2", "pad"], ["piano1", "piano"], ["piano2", "piano"], ["piano3", "piano"], ["sawwave", "saw"], ["percussao", "perc"], ["percussao #2", "perc"],
];
const PICK_TONE = {
  pad: "bg-[#503566] border-[#3f2753] text-[#d8c7e6]",
  piano: "bg-[linear-gradient(#efb7b8,#d9a1a3)] border-[#c48e90] text-[#7b333b]",
  saw: "bg-[linear-gradient(#547f33,#45702a)] border-[#35591d] text-[#dcf0bd]",
  perc: "bg-[linear-gradient(#ab3f3d,#983432)] border-[#7b2423] text-[#ffe0d8]",
};
const PICK_ICON = { pad: "text-[#e2d0f3]", piano: "text-white", saw: "text-[#d9f7a8]", perc: "text-[#ffc9bd]" };
function pickNotes(kind, seed) {
  const r = rng(seed * 97 + 5);
  const n = { pad: 16, piano: 60, saw: 18, perc: 22 }[kind];
  return Array.from({ length: n }, (_, i) => {
    const w = { pad: 19, piano: 3, saw: 22, perc: 6 }[kind];
    return [Math.round(r() * 7) * 17 + (kind === "piano" ? r() * 17 : 0), kind === "piano" ? 10 + Math.floor(r() * 16) : 2 + Math.floor((i * 1.7) % 24), w];
  });
}

function Picker() {
  return (
    <div className="flex w-[155px] shrink-0 flex-col border-r border-l border-[#2a3238] bg-[#434b52]">
      <div className="flex h-10 shrink-0 items-center gap-7 border-b-2 border-[#2a3238] pt-1 pl-[15px]">
        <Keys className="h-3 w-4 text-[#dce1e4]" />
        <WaveIcon className="h-3 w-5 text-[#59626a]" />
        <AutoIcon className="h-3 w-5 text-[#59626a]" />
      </div>
      <div className="flex min-h-0 flex-1">
        <ul className="flex flex-1 flex-col gap-[3px] border-r border-[#262e33] bg-[#333d45] pt-[3px] pr-0.5 pl-[3px]">
          {PICK.map(([n, k], i) => (
            <li key={n} className={`relative h-[29px] rounded-[2px] border ${PICK_TONE[k]}`}>
              <svg viewBox="0 0 134 27" preserveAspectRatio="none" className="absolute inset-0 h-full w-full" aria-hidden="true">
                {pickNotes(k, i + 1).map(([x, y, w], j) => <rect key={j} x={x} y={y} width={w} height="1.5" fill="#fff" opacity=".14" />)}
              </svg>
              <button type="button" className="relative flex h-full w-full items-center gap-[3px] pl-px font-['Roboto_Condensed',sans-serif] text-[14px]">
                <PatternIcon className={`h-2.5 w-[9px] ${PICK_ICON[k]}`} />
                {n}
              </button>
              {n === "piano2" && (
                <svg viewBox="0 0 8 14" className="absolute top-[7px] -left-1 h-3.5 w-2" aria-hidden="true"><path d="M1 1l6 6-6 6z" fill="#f0435c" stroke="#2a1216" strokeWidth="1.5" /></svg>
              )}
            </li>
          ))}
        </ul>
        <div className="w-3 shrink-0 bg-[#3b4349]"><span className="flex h-3.5 items-center justify-center border border-[#6a7279] bg-[#50585f]"><span className="h-1.5 w-0.5 bg-[#20272c]" /></span></div>
      </div>
      <button type="button" aria-label="Add pattern" className="flex h-[21px] shrink-0 items-center justify-center border-t-2 border-[#2a3238] pr-3 text-[#d3d9dc]"><Plus className="size-2.5" strokeWidth={4} /></button>
    </div>
  );
}

/* ---------- playlist ---------- */
const OV = 9.43;
function Overview() {
  const seg = (a, b, y, c, h = 2) => <rect key={`${a}-${y}`} x={(a - 1) * OV} y={y} width={(b - a) * OV} height={h} fill={c} />;
  let noise = "";
  for (let x = 0; x < 1028; x += 2) {
    const bar = x / OV + 1;
    if (bar < 42 || (bar > 51 && bar < 83) || bar > 92) noise += `M${x + 0.5} ${10 + (((x * 7) % 5) % 3)}v2`;
  }
  return (
    <svg viewBox="0 0 1102 18" preserveAspectRatio="none" className="h-full w-full" shapeRendering="crispEdges" aria-hidden="true">
      {[seg(1, 83, 0, "#f8cccc", 1), seg(1, 33, 2, "#567d45"), seg(33, 37, 3, "#567d45"), seg(51, 79, 2, "#567d45"), seg(1, 110, 4, "#6b4d88"), seg(1, 41, 5, "#c0506a", 1), seg(51, 83, 5, "#c0506a", 1),
        seg(1, 5, 6, "#5f9a9d", 1), seg(49, 51, 6, "#75657f", 1), seg(51, 56, 6, "#5f9a9d", 1), seg(108, 110, 6, "#75657f", 1), seg(1, 42, 14, "#a0694a"), seg(51, 59, 14, "#a0694a"), seg(81, 110, 14, "#a0694a"), seg(1, 3, 16, "#6874aa"), seg(51, 53, 16, "#6874aa")]}
      <path d={noise} stroke="#8b7478" />
    </svg>
  );
}

const SmallBtn = ({ label, children }) => (
  <button type="button" aria-label={label} className="flex size-5 shrink-0 items-center justify-center border border-[#6a7279] bg-[#50585f] text-[#1f262b]">{children}</button>
);

function Playlist() {
  const marks = Array.from({ length: 30 }, (_, i) => 1 + i * 4);
  return (
    <section className="flex min-w-0 flex-1">
      <div className="flex min-w-0 flex-1 flex-col">
        <div className="flex h-10 shrink-0 border-b-2 border-[#1f272c]">
          <div className="flex w-[111px] shrink-0 bg-[#434b52]">
            <button type="button" aria-label="Add track" className="flex w-[30px] items-end justify-center rounded-tl-xl border-t border-r-2 border-l border-[#2a3238] bg-[#50585f] pb-1 pl-1 text-[#e3e8eb]"><Plus className="size-3" strokeWidth={4} /></button>
            <div className="grid flex-1 grid-cols-3 place-items-center border-t border-[#2a3238] bg-[#50585f] text-[#7c858c]">
              <WaveIcon className="h-3 w-5 text-[#eef1f3]" />
              <AutoIcon className="h-3 w-4" />
              <Keys className="h-2.5 w-4" />
              <X className="size-3 text-[#eef1f3]" strokeWidth={4} />
              <Ico className="size-3 text-[#687178]" d="M4 22V2M4 14l16-9" />
              <MoveHorizontal className="size-3 text-[#687178]" strokeWidth={3} />
            </div>
          </div>
          <div className="flex min-w-0 flex-1 flex-col">
            <div className="flex h-5 shrink-0 bg-[#3a4147]">
              <SmallBtn label="Scroll left"><ChevronLeft className="size-3" strokeWidth={3} /></SmallBtn>
              <div className="min-w-0 flex-1">
                <div className="h-5 w-[93%] border border-[#6d7c81] bg-[#50616a]"><Overview /></div>
              </div>
              <SmallBtn label="Scroll right"><ChevronRight className="size-3" strokeWidth={3} /></SmallBtn>
            </div>
            <div className="relative min-h-0 flex-1 overflow-hidden bg-[#1f2b32] font-['Roboto_Condensed',sans-serif] text-[12px] leading-[20px] text-[#a3afb6]">
              {marks.map((m) => (
                <span key={m} className="absolute top-0 pl-px" style={{ left: pct((m - 1) * BAR) }}>{m}</span>
              ))}
              <svg viewBox="0 0 9 10" className="absolute top-0.5 left-0 h-2.5 w-[9px]" aria-hidden="true"><path d="M0 0h9L3 8v2H0z" fill="#b9ec78" /></svg>
            </div>
          </div>
        </div>
        <div className="relative min-h-0 flex-1 overflow-hidden bg-[#22303a]">
          <div className="absolute inset-x-0 top-0 flex flex-col">{TRACKS.map((t) => <Track key={t.name} t={t} />)}</div>
        </div>
      </div>
      <div className="flex w-5 shrink-0 flex-col bg-[#3a4046] pl-px">
        <SmallBtn label="Options"><span className="size-[3px] bg-current" /></SmallBtn>
        <SmallBtn label="Scroll up"><ChevronUp className="size-3" strokeWidth={3} /></SmallBtn>
        <span className="h-[31px] border border-[#6a7279] bg-[#50585f]" />
        <span className="flex-1" />
        <SmallBtn label="Scroll down"><ChevronDown className="size-3" strokeWidth={3} /></SmallBtn>
      </div>
    </section>
  );
}

function PlaylistWindow() {
  const s = "size-3.5";
  return (
    <main className="flex min-w-0 flex-1 flex-col bg-[#434b52]">
      <div className="flex h-6 shrink-0 items-center border-l border-[#2a3238] pr-1.5 pl-3 text-[#d5dbde]">
        <Tri className="h-2 w-1" />
        <Horseshoe className="ml-3 size-3" />
        <div className="ml-5 flex items-center gap-[7px]">
          <Pencil className={`${s} -scale-x-100`} strokeWidth={2.5} />
          <Ico className={`${s} text-[#7cc4f2]`} w={0} fill="currentColor" d="M2 5l4-2 3-3 8 9-2 1 9 9-1 4-4 1-8-10-2 2-2 6-3-4-2-2z" />
          <Ban className={s} strokeWidth={2.5} />
          <VolumeX className={s} strokeWidth={2.5} fill="currentColor" />
          <Ico className={s} w={0} fill="currentColor" d="M0 12l8-8v5h8V4l8 8-8 8v-5H8v5z" />
          <Ico className={s} w={0} fill="currentColor" d="M0 2l24 4v16h-9L8 11z" />
          <Scan className={s} strokeWidth={2.5} />
          <Search className={s} strokeWidth={3} />
          <Volume1 className={s} strokeWidth={2.5} fill="currentColor" />
        </div>
        <Ico className="mr-1.5 ml-[19px] size-3.5" w={2}><path d="M1 8h5l5-5v18l-5-5H1z" /><path d="M15 4l8 8-8 8z" fill="currentColor" strokeWidth="0" /></Ico>
        <div className="flex items-center gap-2 font-['Open_Sans',sans-serif] text-[13px] whitespace-nowrap">
          Playlist - Arrangement
          <Tri className="h-1.5 w-1 text-[#7a838a]" />
          Grv Crash 02 - Part_1
          <Tri className="h-1.5 w-1 text-[#7a838a]" />
        </div>
        <div className="ml-auto flex items-center gap-2">
          <button type="button" aria-label="Minimise playlist"><span className="mb-1 block h-0.5 w-[7px] bg-current" /></button>
          <button type="button" aria-label="Restore playlist"><Copy className="size-[11px] -scale-x-100 rotate-180" strokeWidth={3} /></button>
          <button type="button" aria-label="Close playlist"><X className="size-3.5" strokeWidth={3} /></button>
        </div>
      </div>
      <div className="flex min-h-0 flex-1">
        <Picker />
        <div className="w-[7px] shrink-0 border-r border-[#2a3238] bg-[#434b52]" />
        <Playlist />
      </div>
    </main>
  );
}

/* ---------- taskbar ---------- */
const APPS = [
  ["Voice app", "w-[48px] border-b-2 border-[#76b9ed]", <svg viewBox="0 0 16 22" className="h-5 w-4" key="i"><path d="M1 6v10M4 2v17M12 2v17M15 6v10M8 1v20" stroke="#5a3fb8" strokeWidth="1.5" /><circle cx="8" cy="10.500" r="4" fill="#5577ff" /></svg>],
  ["File Explorer", "w-[48px] border-b-2 border-[#76b9ed]", <svg viewBox="0 0 22 20" className="h-5 w-[22px]" key="i"><path d="M0 1h8l2 2h12v16H0z" fill="#e7a81e" /><path d="M0 5h22v14H0z" fill="#fbd568" /><path d="M4 19v-8h14v8h-4v-4H8v4z" fill="#3d9be0" /></svg>],
  ["Cube", "w-[48px]", <svg viewBox="0 0 20 24" className="h-6 w-5" key="i"><path d="M10 0L0 6l10 6z" fill="#8cc152" /><path d="M10 0l10 6-10 6z" fill="#ed5565" /><path d="M20 6v12l-10-6z" fill="#f2c14e" /><path d="M20 18l-10 6V12z" fill="#6a4c93" /><path d="M0 18l10 6V12z" fill="#4a3a35" /><path d="M0 6v12l10-6z" fill="#7d5a48" /><path d="M10 7l5 3v5l-5 3-5-3v-5z" fill="#eceff1" /><path d="M10 13v5l5-3v-5z" fill="#c4c9cd" /></svg>],
  ["Firefox", "w-[48px]", <svg viewBox="0 0 24 24" className="size-6" key="i"><path d="M12 23A11 11 0 0 1 2 8l2-4 2 3q4-3 6-1 1-4 4-6 0 4 4 6 4 5 2 10a11 11 0 0 1-10 7z" fill="#ff7a1f" /><path d="M16 0q0 4 4 6 4 5 2 10-3 3-6 1 2-8-3-11 0-4 3-6z" fill="#ffcf3a" /><path d="M3 15q3 7 9 8 4 0 7-3-9 2-16-5z" fill="#f0308a" /><circle cx="12" cy="13" r="4.5" fill="#8244d8" /></svg>],
  ["Discord", "w-[48px] border-b-2 border-[#76b9ed]", <svg viewBox="0 0 26 26" className="size-[26px]" key="i"><circle cx="12" cy="12" r="11.5" fill="#5865f2" /><path d="M6 8q6-3 12 0 2 4 2 8-2 2-4 2l-1-2H9l-1 2q-2 0-4-2 0-4 2-8z" fill="#fff" /><circle cx="9.500" cy="12.500" r="1.5" fill="#5865f2" /><circle cx="14.500" cy="12.500" r="1.5" fill="#5865f2" /><circle cx="19" cy="19" r="6.5" fill="#ed4245" /><circle cx="19" cy="19" r="2.5" fill="#fff" /></svg>],
  ["Red app", "w-[48px] border-b-2 border-[#76b9ed]", <svg viewBox="0 0 24 24" className="size-6" key="i"><path d="M11 1l12 4-12 18-8-5z" fill="#a5391c" /><path d="M11 1l12 4-4 6-11-4z" fill="#7e2a16" /><path d="M2 19v-6q0-3 4-3t4 3v6H7v-3H5v3zM5 14h2v-1.500H5z" fill="#fff" fillRule="evenodd" /></svg>],
  ["FL Studio", "w-[48px] border-b-2 border-[#76b9ed] bg-[#4a4a4a]", <svg viewBox="0 0 24 24" className="size-6" key="i"><circle cx="12" cy="12" r="11.5" fill="#39464c" /><path d="M6 9q6-3 12 0-1 8-8 15-7-7-4-15z" fill="#ff8a1e" /><path d="M8 11q2-1 3 0l-1 8q-3-3-2-8z" fill="#ffc04d" /><path d="M7 8q-1-4 3-3 0-4 4-4 0 3 4 4-1 5-8 5z" fill="#66b63a" /></svg>],
];

function Taskbar() {
  return (
    <footer className="flex h-10 shrink-0 items-stretch bg-[#1c1c1c] font-['Open_Sans',sans-serif] text-white">
      <button type="button" aria-label="Start" className="flex w-12 items-center justify-center">
        <svg viewBox="0 0 16 16" className="size-4" fill="#fff" aria-hidden="true"><path d="M0 2l7-1v6.500H0zM8 1l8-1v7.500H8zM0 8.500h7V15l-7-1zM8 8.500h8V16l-8-1z" /></svg>
      </button>
      <div className="flex w-[344px] items-center gap-3 border border-[#5a5a5a] bg-[#333] px-3">
        <Search className="size-4 -scale-x-100" strokeWidth={2} />
        <input type="text" aria-label="Search" placeholder="Type here to search" className="w-full bg-transparent text-[14px] text-white outline-none placeholder:text-[#e3e3e3]" />
      </div>
      <nav className="ml-[3px] flex gap-px">
        {APPS.map(([n, c, ic]) => (
          <button key={n} type="button" aria-label={n} className={`flex items-center justify-center ${c}`}>{ic}</button>
        ))}
      </nav>
      <div className="ml-auto flex items-center gap-2 text-center text-[11px] leading-[17px]">
        <ChevronUp className="size-4" />
        <Mic className="size-4" fill="currentColor" />
        <Monitor className="size-4" />
        <Volume2 className="size-4" />
        <span className="ml-0.5">ENG<br />PTB</span>
        <span className="mr-3.5 ml-1.5">4:28 PM<br />9/6/2025</span>
        <button type="button" aria-label="3 notifications" className="relative mr-1 flex size-6 items-center">
          <svg viewBox="0 0 16 16" className="size-4" aria-hidden="true"><path d="M0 0h16v12H8l-3 4v-4H0z" fill="#fff" /><path d="M3 3.500h10M3 6h10M3 8.500h7" stroke="#1c1c1c" /></svg>
          <span className="absolute -right-0.5 -bottom-1 flex size-4 items-center justify-center rounded-full border border-[#8a8a8a] bg-[#333] text-[11px]">3</span>
        </button>
        <span className="h-full border-l border-[#777] pl-1" />
      </div>
    </footer>
  );
}

export default function App() {
  return (
    <div className="flex h-screen flex-col overflow-hidden bg-[#2c353b]">
      <Toolbar />
      <div className="flex min-h-0 flex-1">
        <Browser />
        <div className="w-2 shrink-0 border-x border-[#2c353b] bg-[#454e56]" />
        <PlaylistWindow />
      </div>
      <Taskbar />
    </div>
  );
}
